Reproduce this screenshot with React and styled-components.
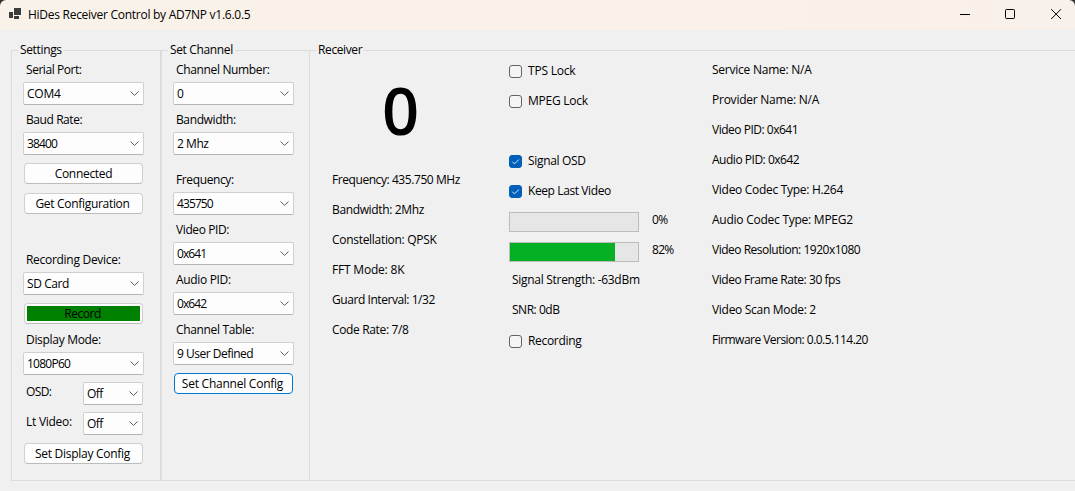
import React from "react";
import styled, { createGlobalStyle, css } from "styled-components";

const GlobalStyle = createGlobalStyle`
  body {
    margin: 0;
    background: #f0f0f0;
    overflow: hidden;
  }
  * {
    box-sizing: border-box;
  }
`;

const Window = styled.div`
  width: 1075px;
  height: 491px;
  display: flex;
  flex-direction: column;
  overflow: hidden;
  background: #f0f0f0;
  color: #000;
  font-family: "Open Sans", "Noto Sans", sans-serif;
  font-size: 12px;
  line-height: 20px;
  white-space: nowrap;
`;

const TitleBar = styled.header`
  flex: none;
  height: 30px;
  display: flex;
  align-items: center;
  padding: 0 13px 1px 9px;
  background: linear-gradient(90deg, #f9f2e9, #faf1e8 60%, #f8f0ea);
  border-radius: 6px 6px 0 0;
`;

const TitleFrame = styled.div`
  flex: none;
  background: #33302e;
`;

const AppIcon = styled.svg`
  width: 13px;
  height: 12px;
  margin: 0 6px 1px 0;
  flex: none;
`;

const Caption = styled.h1`
  margin: 0;
  flex: 1;
  font-size: 12px;
  font-weight: 400;
`;

const CaptionButtons = styled.div`
  display: flex;
  gap: 35px;
  svg {
    display: block;
    width: 11px;
    height: 11px;
  }
`;

const Text = styled.span`
  letter-spacing: ${(p) => p.$track ?? -0.35}px;
`;

const Panels = styled.main`
  flex: 1;
  display: flex;
  padding: 10px 0 10px 11px;
`;

const Group = styled.fieldset`
  flex: none;
  width: ${(p) => p.$width}px;
  height: 441px;
  margin: 0 0 0 ${(p) => p.$shift ?? 0}px;
  padding: 0 ${(p) => p.$pad}px;
  min-width: 0;
  border: 1px solid #dcdcdc;
`;

const Legend = styled.legend`
  height: 20px;
  margin-left: ${(p) => p.$left}px;
  padding: 0 2px;
`;

const Stack = styled.div`
  display: flex;
  flex-direction: column;
`;

const Label = styled.label`
  display: block;
  height: 20px;
  padding-left: 3px;
`;

const Combo = styled.div`
  flex: none;
  width: ${(p) => p.$width ?? 121}px;
  height: 23px;
  display: flex;
  align-items: center;
  justify-content: space-between;
  padding: 0 4px 0 3px;
  border: 1px solid #d0d0d0;
  border-bottom-color: #b4b4b4;
  border-radius: 2px;
  background: #fdfdfd;
  svg {
    width: 9px;
    height: 5px;
    display: block;
  }
`;

const FieldBox = styled.div`
  display: flex;
  flex-direction: column;
  gap: 2px;
  height: 50px;
  margin-bottom: ${(p) => p.$after ?? 0}px;
`;

const InlineField = styled.div`
  display: flex;
  align-items: flex-start;
  justify-content: space-between;
  width: 120px;
  height: 30px;
`;

const Button = styled.button`
  flex: none;
  width: 119px;
  height: 21px;
  margin: ${(p) => p.$before ?? 0}px 0 ${(p) => p.$after ?? 9}px 1px;
  padding: 0 ${(p) => p.$inset ?? 2}px 0 0;
  display: flex;
  align-items: center;
  justify-content: center;
  font: inherit;
  line-height: 18px;
  color: #000;
  background: #fdfdfd;
  border: 1px solid #d0d0d0;
  border-bottom-color: #bcbcbc;
  border-radius: 4px;
  ${(p) =>
    p.$focused &&
    css`
      border-color: #0078d4;
    `}
`;

const RecordFill = styled.span`
  width: 113px;
  height: 15px;
  padding-right: 2px;
  line-height: 15px;
  background: #008000;
  text-align: center;
`;

const Readout = styled.div`
  display: grid;
  grid-template-columns: 177px 203px 1fr;
`;

const FrameCounter = styled.div`
  height: 110px;
  padding-left: 50px;
  font-size: 65px;
  font-weight: 650;
  line-height: 101px;
`;

const Line = styled.div`
  height: 30px;
  padding-left: ${(p) => p.$indent ?? 0}px;
`;

const CheckRow = styled.div`
  display: flex;
  align-items: flex-start;
  gap: 6px;
  height: 30px;
  padding-top: 1px;
  margin-bottom: ${(p) => p.$after ?? 0}px;
`;

const Box = styled.span`
  width: 13px;
  height: 13px;
  margin-top: 4px;
  border: 1px solid ${(p) => (p.$on ? "#005fb8" : "#636363")};
  border-radius: 3px;
  background: ${(p) => (p.$on ? "#005fb8" : "#f4f4f4")};
  svg {
    display: block;
    width: 11px;
    height: 11px;
  }
`;

const MeterRow = styled.div`
  display: flex;
  align-items: flex-start;
  gap: 13px;
  height: 30px;
`;

const Meter = styled.div`
  width: 130px;
  height: 20px;
  margin-top: 2px;
  border: 1px solid #bcbcbc;
  background: #e6e6e6;
`;

const MeterFill = styled.div`
  height: 100%;
  background: #06b025;
`;

const Chevron = () => (
  <svg viewBox="0 0 9 5" fill="none" stroke="#5c5c5c">
    <path d="M.5 .5 4.5 4.4 8.5 .5" />
  </svg>
);

const Field = ({ label, lt, value, vt, after }) => (
  <FieldBox $after={after}>
    <Label>
      <Text $track={lt}>{label}</Text>
    </Label>
    <Combo>
      <Text $track={vt}>{value}</Text>
      <Chevron />
    </Combo>
  </FieldBox>
);

const Toggle = ({ label, track }) => (
  <InlineField>
    <Label>
      <Text $track={track}>{label}</Text>
    </Label>
    <Combo $width={60}>
      <Text $track={-0.5}>Off</Text>
      <Chevron />
    </Combo>
  </InlineField>
);

const Check = ({ on, label, track, after }) => (
  <CheckRow $after={after}>
    <Box $on={on}>
      {on && (
        <svg viewBox="0 0 11 11" fill="none" stroke="#dcebf8">
          <path d="M2.3 5.7 4.5 7.9 8.9 3.5" />
        </svg>
      )}
    </Box>
    <Text $track={track}>{label}</Text>
  </CheckRow>
);

const Level = ({ value }) => (
  <MeterRow>
    <Meter>
      <MeterFill style={{ width: `${value}%` }} />
    </Meter>
    <Text $track={-0.7}>{value}%</Text>
  </MeterRow>
);

const tuning = [
  ["Frequency: 435.750 MHz", -0.43],
  ["Bandwidth: 2Mhz", -0.36],
  ["Constellation: QPSK", -0.3],
  ["FFT Mode: 8K", -0.2],
  ["Guard Interval: 1/32", -0.44],
  ["Code Rate: 7/8", -0.35],
];

const service = [
  ["Service Name: N/A", -0.24],
  ["Provider Name: N/A", -0.24],
  ["Video PID: 0x641", -0.49],
  ["Audio PID: 0x642", -0.48],
  ["Video Codec Type: H.264", -0.3],
  ["Audio Codec Type: MPEG2", -0.25],
  ["Video Resolution: 1920x1080", -0.49],
  ["Video Frame Rate: 30 fps", -0.43],
  ["Video Scan Mode: 2", -0.3],
  ["Firmware Version: 0.0.5.114.20", -0.53],
];

export default function App() {
  return (
    <Window>
      <GlobalStyle />
      <TitleFrame>
        <TitleBar>
          <AppIcon viewBox="0 0 13 12" fill="#3c3c3c">
            <path d="M5 0h7v7H5zM0 4h4v6H0zM5 8h5v3H5z" />
          </AppIcon>
          <Caption>
            <Text $track={-0.27}>HiDes Receiver Control by AD7NP v1.6.0.5</Text>
          </Caption>
          <CaptionButtons>
            <svg viewBox="0 0 11 11" fill="none" stroke="#000">
              <path d="M1 5.5h10" />
            </svg>
            <svg viewBox="0 0 11 11" fill="none" stroke="#000">
              <rect x=".5" y=".5" width="9" height="9" rx=".8" />
            </svg>
            <svg viewBox="0 0 11 11" fill="none" stroke="#000">
              <path d="M.2 .2l9.8 9.8M10 .2l-9.8 9.8" />
            </svg>
          </CaptionButtons>
        </TitleBar>
      </TitleFrame>
      <Panels>
        <Group $width={150} $pad={11}>
          <Legend $left={-5}>
            <Text $track={-0.35}>Settings</Text>
          </Legend>
          <Stack>
            <Field label="Serial Port:" lt={-0.45} value="COM4" vt={-0.23} />
            <Field label="Baud Rate:" lt={-0.42} value="38400" vt={-0.85} after={3} />
            <Button $inset={0}>
              <Text $track={-0.3}>Connected</Text>
            </Button>
            <Button $after={36}>
              <Text $track={-0.31}>Get Configuration</Text>
            </Button>
            <Field label="Recording Device:" lt={-0.29} value="SD Card" vt={-0.42} after={3} />
            <Button $after={6} $inset={0}>
              <RecordFill>
                <Text $track={-0.46}>Record</Text>
              </RecordFill>
            </Button>
            <Field label="Display Mode:" lt={-0.31} value="1080P60" vt={-0.75} after={2} />
            <Toggle label="OSD:" track={-0.6} />
            <Toggle label="Lt Video:" track={-0.26} />
            <Button $before={1} $after={0}>
              <Text $track={-0.28}>Set Display Config</Text>
            </Button>
          </Stack>
        </Group>
        <Group $width={149} $pad={11}>
          <Legend $left={-5}>
            <Text $track={-0.35}>Set Channel</Text>
          </Legend>
          <Stack>
            <Field label="Channel Number:" lt={-0.35} value="0" />
            <Field label="Bandwidth:" lt={-0.38} value="2 Mhz" vt={-0.45} after={10} />
            <Field label="Frequency:" lt={-0.38} value="435750" vt={-0.9} />
            <Field label="Video PID:" lt={-0.4} value="0x641" vt={-0.9} />
            <Field label="Audio PID:" lt={-0.33} value="0x642" vt={-0.9} />
            <Field label="Channel Table:" lt={-0.34} value="9 User Defined" vt={-0.5} after={3} />
            <Button $focused>
              <Text $track={-0.24}>Set Channel Config</Text>
            </Button>
          </Stack>
        </Group>
        <Group $width={780} $shift={-1} $pad={22}>
          <Legend $left={-16}>
            <Text $track={-0.38}>Receiver</Text>
          </Legend>
          <Readout>
            <Stack>
              <FrameCounter>0</FrameCounter>
              {tuning.map(([text, track]) => (
                <Line key={text}>
                  <Text $track={track}>{text}</Text>
                </Line>
              ))}
            </Stack>
            <Stack>
              <Check label="TPS Lock" track={-0.22} />
              <Check label="MPEG Lock" track={-0.24} after={30} />
              <Check on label="Signal OSD" track={-0.32} />
              <Check on label="Keep Last Video" track={-0.4} />
              <Level value={0} />
              <Level value={82} />
              <Line $indent={3}>
                <Text $track={-0.29}>Signal Strength: -63dBm</Text>
              </Line>
              <Line $indent={3}>
                <Text $track={-0.48}>SNR: 0dB</Text>
              </Line>
              <Check label="Recording" track={-0.31} />
            </Stack>
            <Stack>
              {service.map(([text, track]) => (
                <Line key={text}>
                  <Text $track={track}>{text}</Text>
                </Line>
              ))}
            </Stack>
          </Readout>
        </Group>
      </Panels>
    </Window>
  );
}
